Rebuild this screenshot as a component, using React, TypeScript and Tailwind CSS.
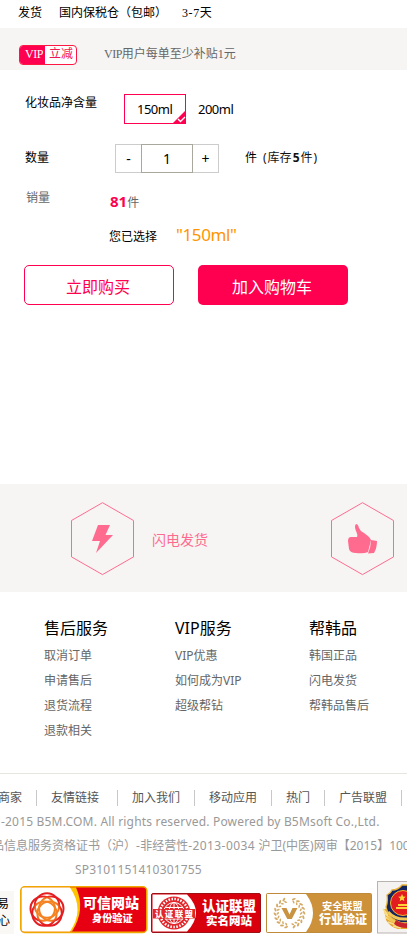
import React from "react";

const links = [
  { title: "售后服务", cls: "w-[131px]", items: ["取消订单", "申请售后", "退货流程", "退款相关"] },
  { title: "VIP服务", cls: "w-[134px]", items: ["VIP优惠", "如何成为VIP", "超级帮钻"] },
  { title: "帮韩品", cls: "w-[97px]", items: ["韩国正品", "闪电发货", "帮韩品售后"] },
];

const nav = [
  { text: "友情链接", cls: "w-[81px]" },
  { text: "加入我们", cls: "w-[77px]" },
  { text: "移动应用", cls: "w-[77px]" },
  { text: "热门", cls: "w-[53px]" },
  { text: "广告联盟", cls: "w-[77px]" },
];

function Hexagon({ children }: { children: React.ReactNode }) {
  return (
    <svg width="64" height="74" viewBox="0 0 64 74" className="shrink-0" fill="#ff6b8f">
      <path d="M31.5 .7 62.5 18.5v36.4L31.5 72.6.5 54.9V18.5Z" fill="none" stroke="#ff6b8f" />
      {children}
    </svg>
  );
}

function TrustedBadge() {
  return (
    <svg width="128" height="48" viewBox="0 0 128 48" className="shrink-0">
      <defs>
        <radialGradient id="swirl" gradientUnits="userSpaceOnUse" cx="0" cy="0" r="18">
          <stop offset=".62" stopColor="#f58220" />
          <stop offset=".8" stopColor="#e51c20" />
        </radialGradient>
      </defs>
      <rect x=".8" y=".8" width="126" height="45.6" rx="4" fill="#e60012" stroke="#f0a800" strokeWidth="1.6" />
      <path d="M4 1.6H56q10 22-4 44H4q-2.4 0-2.4-3V4q0-2.4 2.4-2.4Z" fill="#ffc400" />
      <path d="M4 1.6H50q15 22 0 44H4q-2.4 0-2.4-3V4q0-2.4 2.4-2.4Z" fill="#fff" />
      <g fill="none" stroke="url(#swirl)" strokeWidth="2" transform="translate(27 24)">
        <circle cx="0" cy="-4.5" r="12.2" />
        <circle cx="4.3" cy="-1.4" r="12.2" />
        <circle cx="2.6" cy="3.6" r="12.2" />
        <circle cx="-2.6" cy="3.6" r="12.2" />
        <circle cx="-4.3" cy="-1.4" r="12.2" />
      </g>
      <text x="63" y="21.5" fontSize="14" fontWeight="900" fill="#fff">可信网站</text>
      <text x="72" y="36" fontSize="10.2" fontWeight="900" fill="#fff">身份验证</text>
    </svg>
  );
}

function RealNameBadge() {
  return (
    <svg width="110" height="40" viewBox="0 0 110 40" className="shrink-0">
      <rect x=".5" y=".5" width="109" height="39" rx="1.5" fill="#d9000d" stroke="#9f1015" />
      <path d="M1.5 1.5H36q18 18 0 37H1.5Z" fill="#fff" />
      <circle cx="23" cy="20" r="16.5" fill="#e1262c" />
      <circle cx="23" cy="20" r="14" fill="none" stroke="#fff" strokeWidth="2.5" strokeDasharray="1.5 1.5" />
      <g fill="none" stroke="#fff" strokeWidth="1">
        <circle cx="23" cy="20" r="10.5" />
        <ellipse cx="23" cy="20" rx="5" ry="10.5" />
        <path d="M23 9v22M14 14.5h18M14 26h18" />
      </g>
      <path d="M2 16h42v9.5H2Z" fill="#e1262c" />
      <text x="4" y="24" fontSize="8.5" fontWeight="900" fill="#fff" textLength="38">认证联盟</text>
      <text x="51" y="17.5" fontSize="13.5" fontWeight="900" fill="#fff">认证联盟</text>
      <text x="55" y="32" fontSize="11.5" fontWeight="900" fill="#fff">实名网站</text>
    </svg>
  );
}

function IndustryBadge() {
  return (
    <svg width="106" height="40" viewBox="0 0 106 40" className="shrink-0">
      <rect x=".5" y=".5" width="105" height="39" rx="1" fill="#cc9139" stroke="#c08a3c" />
      <path d="M1 1H40q14 19 0 38H1Z" fill="#fff" />
      <path d="M15.5 15h5l3 6.5 3-6.5h5L25.8 26h-4.5Z" fill="#c99341" />
      <g fill="#d4aa66">
        {[20, 38, 56, 74, 92, 110, 128, 146, 164, 196, 214, 232, 250, 268, 286, 304, 322, 340].map((a) => (
          <g key={a} transform={`rotate(${a} 23.5 20)`}>
            <ellipse cx="22.8" cy="5.5" rx="1" ry="2" transform="rotate(55 22.8 5.5)" />
            <ellipse cx="23.5" cy="8.3" rx=".8" ry="1.6" transform="rotate(-45 23.5 8.3)" />
          </g>
        ))}
      </g>
      <text x="56" y="17" fontSize="10.2" fontWeight="700" fill="#fff">安全联盟</text>
      <text x="53" y="30.5" fontSize="12" fontWeight="900" fill="#fff">行业验证</text>
    </svg>
  );
}

function PoliceBadge() {
  return (
    <svg width="30" height="53" viewBox="0 0 30 53" className="shrink-0">
      <rect x=".5" y=".5" width="40" height="51.5" fill="#f5f3f2" stroke="#b8b2b0" />
      <path d="M7 28 9 39q4 7 12 9h9V30Z" fill="#e6a52f" />
      <path d="m6 28 5 6M7 32l6 5M8 36l7 4M11 41l8 3M16 45l8 2" stroke="#f9df8c" strokeWidth="1.6" />
      <path d="M25 4q-4 5-10 5-1 3-5 5 1 7-1 12 2 12 16 16h6V4Z" fill="#15255e" stroke="#e9b23a" strokeWidth="1.3" />
      <circle cx="26" cy="22" r="12.5" fill="#e31c20" stroke="#f2b632" strokeWidth="1" />
      <path d="m25 13 1.2 2.4 2.6.3-2 1.8.6 2.7-2.4-1.4-2.3 1.4.5-2.7-2-1.8 2.7-.3ZM19 26h11v2H19ZM21 23h9v2h-9Z" fill="#ffd23c" />
      <path d="M11 31q7 8 19 7M11 36q8 8 19 7" fill="none" stroke="#f1c758" strokeWidth="3" />
      <path d="M19 39q5 4 11 3v5q-8 0-13-4Z" fill="#c9242b" />
    </svg>
  );
}

export default function App() {
  return (
    <div className="h-[936px] w-full overflow-hidden whitespace-nowrap bg-white font-['Noto_Sans','Noto_Sans_CJK_SC',sans-serif] text-xs text-black">
      <header className="flex h-7 items-center pb-[3px] pl-[18px] font-['Liberation_Serif','Noto_Sans_CJK_SC',serif]">
        <span className="w-[41px]">发货</span>
        <span className="w-[123px]">国内保税仓（包邮）</span>
        <span><span className="tracking-[0.6px]">3-7</span>天</span>
      </header>

      <section className="flex h-[42px] items-center bg-[#f6f5f3] pl-[19px] font-['Liberation_Serif','Noto_Sans_CJK_SC',serif]">
        <div className="mt-3 flex h-5 w-[58px] overflow-hidden rounded-sm border border-[#ff1744] bg-white leading-[17px]">
          <span className="w-[25px] bg-[#ff0050] pl-[5px] tracking-[-0.5px] text-white">VIP</span>
          <span className="pl-1 text-[#f01850]">立减</span>
        </div>
        <p className="ml-[27px] mt-[9px] text-[#666]"><span className="tracking-[-0.5px]">VIP</span>用户每单至少补贴1元</p>
      </section>

      <section className="h-[414px]">
        <div className="flex h-[74px] pt-6 text-[13px]">
          <span className="ml-[25px] w-[99px] text-xs leading-[18px]">化妆品净含量</span>
          <button className="relative h-[30px] w-[62px] border border-[#ff0050] pl-3 text-left leading-7 tracking-[-0.5px]">
            150ml
            <svg width="14" height="14" viewBox="0 0 14 14" className="absolute -bottom-px -right-px">
              <path d="M14 0v14H0Z" fill="#ff0050" />
              <path d="m6 9 2.5 2.5L13 7" fill="none" stroke="#fff" strokeWidth="1.4" />
            </svg>
          </button>
          <span className="ml-3 leading-[30px] tracking-[-0.5px]">200ml</span>
        </div>

        <div className="flex h-[45px] leading-[27px]">
          <span className="ml-[25px] w-[90px]">数量</span>
          <div className="flex h-[29px] w-[104px] text-center text-sm leading-[27px]">
            <button className="w-[26px] border border-r-0 border-[#ccc]">-</button>
            <span className="w-[52px] border border-[#a8a89c]">1</span>
            <button className="w-[26px] border border-l-0 border-[#ccc]">+</button>
          </div>
          <span className="ml-[26px] w-[18px]">件</span>
          <span className="text-[#111]"><span className="mr-px">(</span>库存<b className="mx-px">5</b>件<span className="ml-px">)</span></span>
        </div>

        <div className="flex h-[35px] text-[#666]">
          <span className="ml-[26px] w-[84px] pt-px">销量</span>
          <span className="pt-[3px]"><b className="font-['Open_Sans'] text-[15px] leading-[18px] text-[#ff0050]">81</b>件</span>
        </div>
        <div className="flex h-[41px] items-start">
          <span className="ml-[109px] w-[67px] pt-[5px]">您已选择</span>
          <span className="text-[17px] leading-[22px] tracking-[-0.4px] text-[#ff9500]">"150ml"</span>
        </div>

        <div className="flex gap-6 pl-6 text-base">
          <button className="h-10 w-[150px] rounded-[5px] border border-[#ff0050] pr-0.5 pt-[3px] text-[#ff0050]">立即购买</button>
          <button className="h-10 w-[150px] rounded-[5px] bg-[#ff0050] pr-0.5 pt-[3px] text-white">加入购物车</button>
        </div>
      </section>

      <section className="flex h-[108px] items-start bg-[#f6f5f3] pl-[71px] pt-[18px]">
        <Hexagon>
          <path d="M27 23h12l-4.5 10H42L25 51l4-12h-8Z" />
        </Hexagon>
        <span className="ml-[17px] w-[179px] pt-7 text-sm text-[#ff6b8f]">闪电发货</span>
        <Hexagon>
          <path d="M25 22q2 0 3 4 1 3 5 5 6 4 7 7L37 50q-4 2-12 1-6 0-7-4l-1-8q0-4 3-4h6q1-2-1-6-2-5 0-7Z" />
          <path d="m40 38 6 1q0 7-3 12l-6 .5q3-7 3-13.5Z" />
        </Hexagon>
      </section>

      <section className="flex h-[181px] pl-11 pt-6">
        {links.map((group) => (
          <div key={group.title} className={`${group.cls} shrink-0`}>
            <h3 className="h-[27px] text-base leading-6">{group.title}</h3>
            <ul className="leading-[25px] text-[#666]">
              {group.items.map((item) => <li key={item}>{item}</li>)}
            </ul>
          </div>
        ))}
      </section>

      <footer className="border-t border-[#e7e5df] pt-[15px] text-[#999]">
        <nav className="flex h-[21px] items-start leading-[18px] text-[#555]">
          <span className="-ml-0.5 w-[38px] shrink-0">商家</span>
          {nav.map((item) => (
            <span key={item.text} className={`${item.cls} flex shrink-0 items-center`}>
              <i className="mr-3.5 h-4 w-px bg-[#c8c8c8]" />{item.text}
            </span>
          ))}
          <i className="mt-px h-4 w-px shrink-0 bg-[#c8c8c8]" />
        </nav>
        <div className="leading-6">
          <p className="pl-px tracking-[0.19px]">-2015 B5M.COM. All rights reserved. Powered by B5Msoft Co.,Ltd.</p>
          <p className="-ml-2">品信息服务资格证书（沪）<span className="tracking-[0.4px]">-</span>非经营性<span className="tracking-[0.4px]">-2013-0034 </span>沪卫(中医)网审【2015】100</p>
          <p className="pl-[75px] tracking-[0.18px]">SP3101151410301755</p>
        </div>
        <div className="-mt-px flex h-[53px] items-end font-['Noto_Sans_CJK_SC',sans-serif]">
          <div className="mr-1.5 flex h-[43px] w-[14px] flex-col justify-center overflow-hidden bg-[#faf8f4] pb-1 leading-[17px] text-black">
            <span className="-ml-[3px]">易</span>
            <span className="-ml-[2px]">心</span>
          </div>
          <TrustedBadge />
          <span className="mb-px ml-[3px]"><RealNameBadge /></span>
          <span className="mb-px ml-[5px]"><IndustryBadge /></span>
          <span className="ml-[5px]"><PoliceBadge /></span>
        </div>
      </footer>
    </div>
  );
}
